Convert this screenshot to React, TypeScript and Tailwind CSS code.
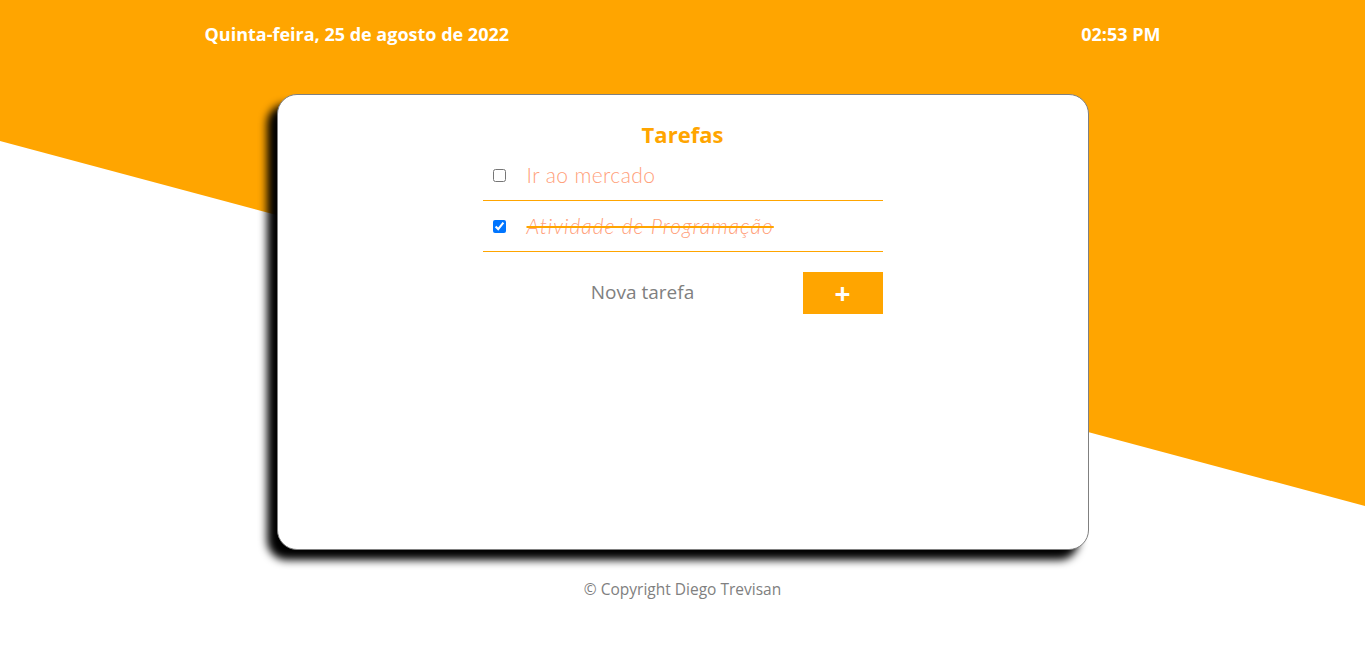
import React, { useState } from "react";

type Task = { id: number; title: string; done: boolean };

const initialTasks: Task[] = [
  { id: 1, title: "Ir ao mercado", done: false },
  { id: 2, title: "Atividade de Programação", done: true },
];

export default function App() {
  const [tasks, setTasks] = useState<Task[]>(initialTasks);
  const [text, setText] = useState("");

  const toggle = (id: number) =>
    setTasks((t) => t.map((x) => (x.id === id ? { ...x, done: !x.done } : x)));

  const add = () => {
    if (!text.trim()) return;
    setTasks((t) => [...t, { id: Date.now(), title: text, done: false }]);
    setText("");
  };

  return (
    <div className="relative min-h-[647px] w-full overflow-hidden bg-white font-['Open_Sans','Noto_Sans',sans-serif]">
      {/* diagonal background */}
      <svg
        className="absolute inset-0 h-[647px] w-full"
        viewBox="0 0 1365 647"
        preserveAspectRatio="none"
      >
        <polygon points="0,0 1365,0 1365,506 0,141" fill="#ffa500" />
      </svg>

      <div className="relative">
        <header className="mx-auto flex h-[68px] w-[956px] items-center justify-between pt-[1px] text-[18px] font-bold text-white">
          <span>Quinta-feira, 25 de agosto de 2022</span>
          <span>02:53 PM</span>
        </header>

        <main className="mx-auto mt-[26px] h-[456px] w-[812px] rounded-[20px] border border-[#808080] bg-white shadow-[-10px_10px_8px_#000]">
          <div className="mx-auto flex w-[400px] flex-col">
            <h1 className="mt-[23px] text-center text-[22px] font-bold leading-[32px] text-[#ffa500]">
              Tarefas
            </h1>
            <ul>
              {tasks.map((t) => (
                <li
                  key={t.id}
                  className="flex h-[51px] items-center border-b border-[#ffa500] pl-[10px]"
                >
                  <input
                    type="checkbox"
                    checked={t.done}
                    onChange={() => toggle(t.id)}
                    className="h-[13px] w-[13px]"
                  />
                  <span
                    className={`ml-[21px] font-['Lato',sans-serif] text-[21px] font-light text-[#ffa07a] ${
                      t.done
                        ? "italic tracking-[1px] line-through decoration-[#ffa500]"
                        : "tracking-[0.4px]"
                    }`}
                  >
                    {t.title}
                  </span>
                </li>
              ))}
            </ul>
            <div className="mt-[20px] flex h-[42px]">
              <input
                value={text}
                onChange={(e) => setText(e.target.value)}
                placeholder="Nova tarefa"
                className="w-[320px] bg-transparent pb-[2px] text-center text-[19px] text-[#555] outline-none placeholder:text-[#808080]"
              />
              <button
                onClick={add}
                className="flex w-[80px] items-center justify-center bg-[#ffa500] text-[28px] font-bold leading-none text-white"
              >
                +
              </button>
            </div>
          </div>
        </main>

        <footer className="mt-[28px] text-center text-[15.5px] text-[#808080]">
          © Copyright Diego Trevisan
        </footer>
      </div>
    </div>
  );
}
